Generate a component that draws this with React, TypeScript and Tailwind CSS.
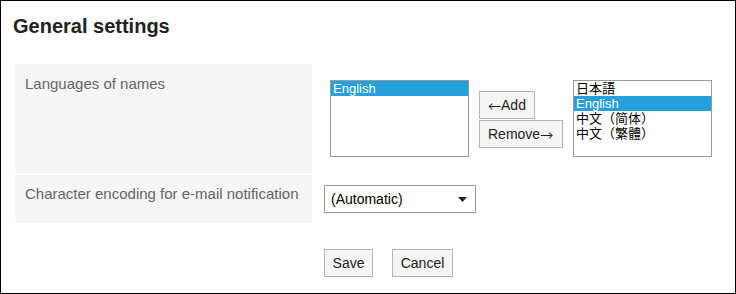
const font = "font-['Liberation_Sans','Noto_Sans_CJK_JP',Arial,sans-serif]";
const arrowFont = "font-['Noto_Sans_CJK_JP',sans-serif]";

function ListBox({ items, selected }: { items: string[]; selected: string }) {
	return (
		<div className="h-[77px] w-[139px] shrink-0 border border-[#999] bg-white text-[13px] leading-[15px] text-black">
			{items.map((item) => (
				<div
					key={item}
					className={item === selected ? "bg-[#26a0da] px-[2px] text-white" : "px-[2px]"}
				>
					{item}
				</div>
			))}
		</div>
	);
}

function Button({ children, className = "" }: { children: React.ReactNode; className?: string }) {
	return (
		<button
			type="button"
			className={`flex h-[28px] items-center border border-[#b5b5b5] bg-[#f5f5f5] px-[8px] text-[14px] leading-none text-[#222] ${className}`}
		>
			{children}
		</button>
	);
}

export default function App() {
	return (
		<div className={`h-[294px] w-[736px] border border-black bg-white ${font}`}>
			<h1 className="pl-[12px] pt-[13px] text-[20px] font-bold leading-[24px] text-[#222]">General settings</h1>
			<div className="mt-[26px] flex flex-col gap-[2px] pl-[14px]">
				<div className="flex h-[109px]">
					<div className="w-[297px] shrink-0 bg-[#f5f5f5] pl-[10px] pt-[11px] text-[15px] leading-[18px] text-[#666]">
						Languages of names
					</div>
					<div className="flex items-start pl-[18px] pt-[16px]">
						<ListBox items={["English"]} selected="English" />
						<div className="ml-[10px] mt-[11px] flex flex-col items-start gap-[1px]">
							<Button className="w-[56px]">
								<span className={`${arrowFont} text-[13px]`}>←</span>Add
							</Button>
							<Button className="w-[84px]">
								Remove<span className={`${arrowFont} text-[13px]`}>→</span>
							</Button>
						</div>
						<div className="ml-[10px]">
							<ListBox items={["日本語", "English", "中文（简体）", "中文（繁體）"]} selected="English" />
						</div>
					</div>
				</div>
				<div className="flex h-[48px]">
					<div className="w-[297px] shrink-0 bg-[#f5f5f5] pl-[10px] pt-[10px] text-[15px] leading-[18px] text-[#666]">
						Character encoding for e-mail notification
					</div>
					<div className="pl-[12px] pt-[10px]">
						<div className="flex h-[28px] w-[152px] items-center justify-between border border-[#999] bg-white pl-[6px] pr-[8px] text-[14px] text-black">
							<span>(Automatic)</span>
							<svg width="9" height="5" viewBox="0 0 9 5">
								<path d="M0 0h9L4.5 5z" fill="#222" />
							</svg>
						</div>
					</div>
				</div>
			</div>
			<div className="mt-[26px] flex gap-[19px] pl-[323px]">
				<Button className="w-[49px] justify-center">Save</Button>
				<Button className="w-[61px] justify-center">Cancel</Button>
			</div>
		</div>
	);
}
